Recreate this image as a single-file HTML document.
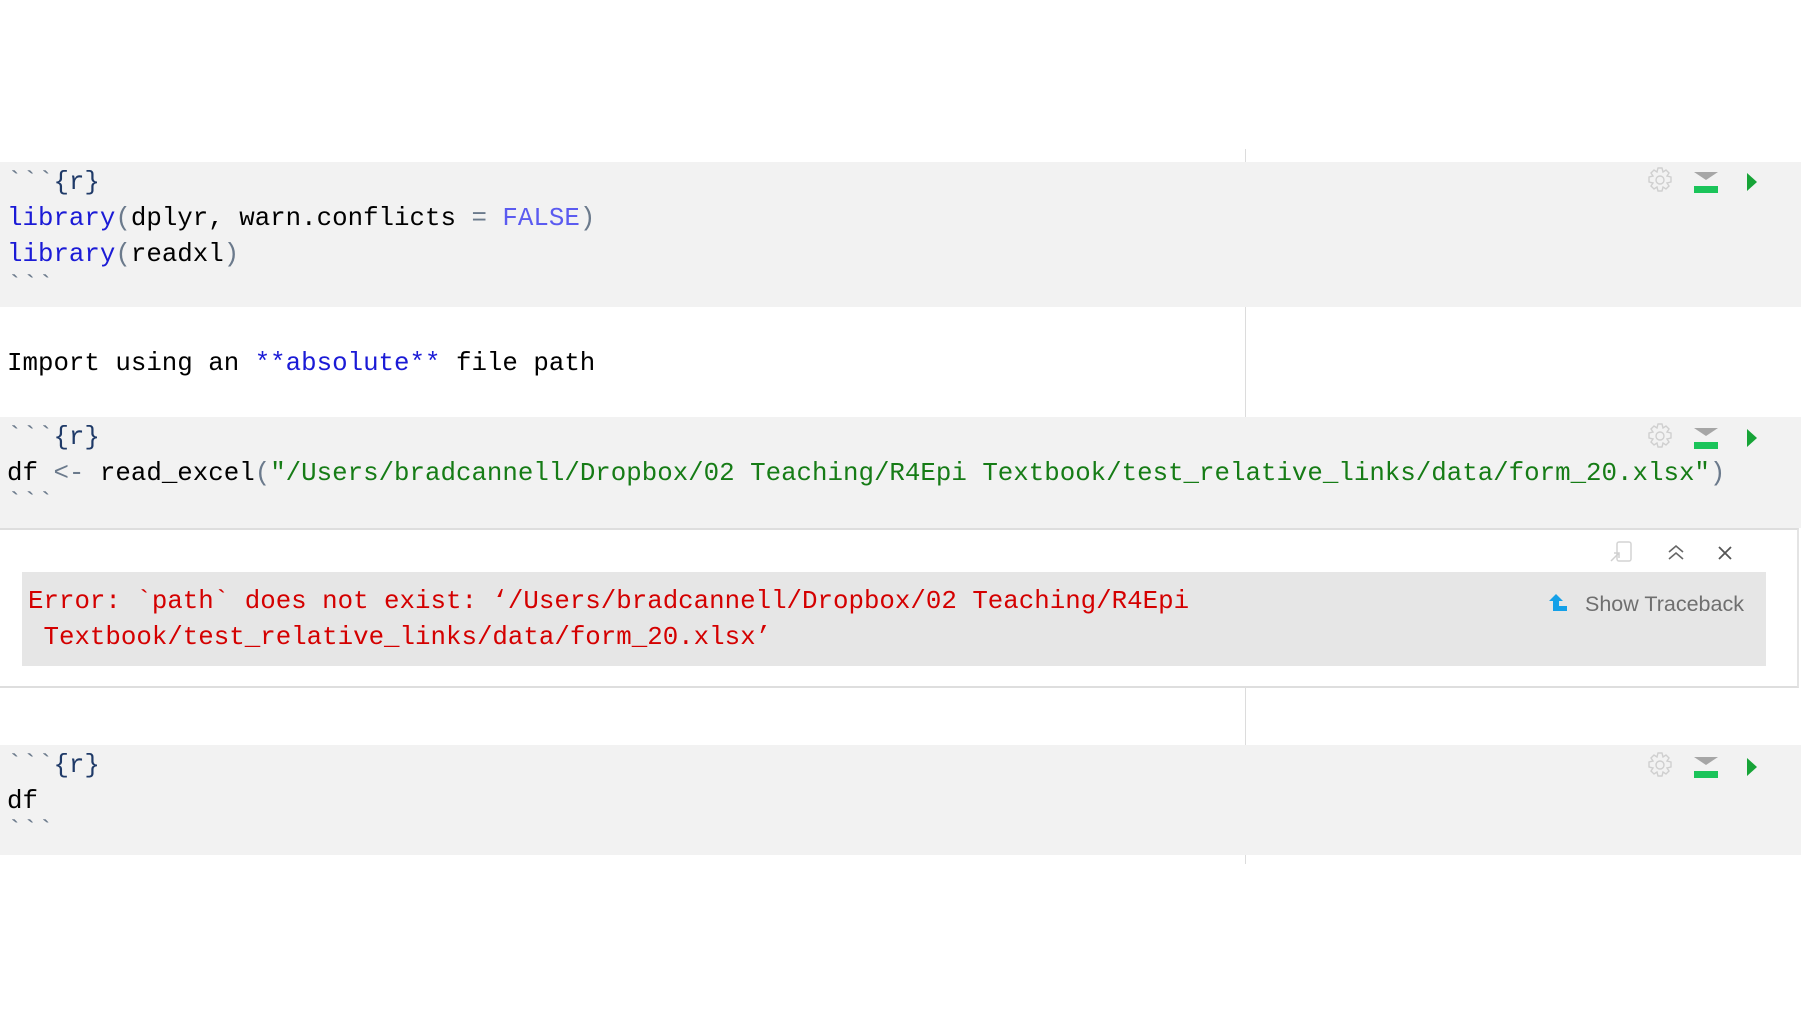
<!DOCTYPE html>
<html><head><meta charset="utf-8"><style>
html,body{margin:0;padding:0}
body{width:1801px;height:1013px;background:#ffffff;position:relative;overflow:hidden;font-family:"Liberation Mono",monospace}
.blk{position:absolute;left:0;width:1801px;background:#f2f2f2}
.txt{position:absolute;left:7px;font-size:25.8px;line-height:36px;white-space:pre;color:#000000;margin:0}
.kw{color:#1b1bd6}.pp{color:#6b7a8c}.st{color:#167c16}.cc{color:#1f3a68}
.vl{position:absolute;left:1245px;width:1px;background:#dcdcdc}
.ic{position:absolute}
</style></head><body>
<div class="vl" style="top:149px;height:380px"></div>
<div class="vl" style="top:688px;height:176px"></div>

<div class="blk" style="top:162px;height:145px"></div>
<div class="blk" style="top:417px;height:111px"></div>
<div style="position:absolute;left:0;top:528px;width:1799px;height:160px;border-top:2px solid #dedede;border-bottom:2px solid #dedede;border-right:2px solid #e4e4e4;background:#fff;box-sizing:border-box"></div>
<div style="position:absolute;left:22px;top:572px;width:1744px;height:94px;background:#e6e6e6"></div>
<div class="blk" style="top:745px;height:110px"></div>

<div class="txt" style="top:165px"><span class="pp">&#96;&#96;&#96;</span><span class="cc">{r}</span></div>
<div class="txt" style="top:201px"><span class="kw">library</span><span class="pp">(</span>dplyr, warn.conflicts <span class="pp">=</span> <span style="color:#5b5bf0">FALSE</span><span class="pp">)</span></div>
<div class="txt" style="top:237px"><span class="kw">library</span><span class="pp">(</span>readxl<span class="pp">)</span></div>
<div class="txt" style="top:269px"><span class="pp">&#96;&#96;&#96;</span></div>

<div class="txt" style="top:346px">Import using an <span class="kw">**absolute**</span> file path</div>

<div class="txt" style="top:420px"><span class="pp">&#96;&#96;&#96;</span><span class="cc">{r}</span></div>
<div class="txt" style="top:456px">df <span class="pp">&lt;-</span> read_excel<span class="pp">(</span><span class="st">"/Users/bradcannell/Dropbox/02 Teaching/R4Epi Textbook/test_relative_links/data/form_20.xlsx"</span><span class="pp">)</span></div>
<div class="txt" style="top:486px"><span class="pp">&#96;&#96;&#96;</span></div>

<div class="txt" style="top:584px;left:28px;color:#d40000">Error: &#96;path&#96; does not exist: ‘/Users/bradcannell/Dropbox/02 Teaching/R4Epi</div>
<div class="txt" style="top:620px;left:28px;color:#d40000"> Textbook/test_relative_links/data/form_20.xlsx’</div>

<div class="txt" style="top:748px"><span class="pp">&#96;&#96;&#96;</span><span class="cc">{r}</span></div>
<div class="txt" style="top:784px">df</div>
<div class="txt" style="top:814px"><span class="pp">&#96;&#96;&#96;</span></div>

<svg class="ic" style="left:1548px;top:594px" width="20" height="18" viewBox="0 0 20 18"><path d="M8 0 L15 7 L11 7 L11 12 L19 12 L19 17 L5 17 L5 7 L1 7 Z" fill="#14a0e8"/></svg>
<div style="position:absolute;left:1585px;top:592px;font-family:'Liberation Sans',sans-serif;font-size:21.5px;color:#6f6f6f">Show Traceback</div>
<svg class="ic" style="left:1608px;top:540px" width="26" height="24" viewBox="0 0 26 24"><rect x="9" y="2" width="14" height="19" rx="2" fill="none" stroke="#d4d4d4" stroke-width="1.5"/><path d="M3 21 L11 13 M6 13 L11 13 L11 18" stroke="#d0d0d0" stroke-width="1.5" fill="none"/></svg>
<svg class="ic" style="left:1666px;top:543px" width="20" height="18" viewBox="0 0 20 18"><path d="M3 9 L10 3 L17 9 M3 16 L10 10 L17 16" stroke="#666" stroke-width="1.6" fill="none"/></svg>
<svg class="ic" style="left:1717px;top:545px" width="16" height="16" viewBox="0 0 16 16"><path d="M2 2 L14 14 M14 2 L2 14" stroke="#555" stroke-width="1.8"/></svg>

<svg class="ic" style="left:1640px;top:163px" width="130" height="40" viewBox="0 0 130 40"><g transform="translate(20,17)" fill="none" stroke="#cfcfcf" stroke-width="1.4"><circle r="4"/><path d="M-2 -12 L2 -12 L3 -8 L6 -10 L9 -7 L7 -4 L11 -3 L11 2 L7 3 L9 6 L6 9 L3 7 L2 11 L-2 11 L-3 7 L-6 9 L-9 6 L-7 3 L-11 2 L-11 -3 L-7 -4 L-9 -7 L-6 -10 L-3 -8 Z"/></g><path d="M54 9 L78 9 L66 17 Z" fill="#a6a6a6"/><rect x="54" y="23" width="24" height="7" fill="#1bc45a"/><path d="M107 10 L117 19 L107 28 Z" fill="#17a437"/></svg>
<svg class="ic" style="left:1640px;top:419px" width="130" height="40" viewBox="0 0 130 40"><g transform="translate(20,17)" fill="none" stroke="#cfcfcf" stroke-width="1.4"><circle r="4"/><path d="M-2 -12 L2 -12 L3 -8 L6 -10 L9 -7 L7 -4 L11 -3 L11 2 L7 3 L9 6 L6 9 L3 7 L2 11 L-2 11 L-3 7 L-6 9 L-9 6 L-7 3 L-11 2 L-11 -3 L-7 -4 L-9 -7 L-6 -10 L-3 -8 Z"/></g><path d="M54 9 L78 9 L66 17 Z" fill="#a6a6a6"/><rect x="54" y="23" width="24" height="7" fill="#1bc45a"/><path d="M107 10 L117 19 L107 28 Z" fill="#17a437"/></svg>
<svg class="ic" style="left:1640px;top:748px" width="130" height="40" viewBox="0 0 130 40"><g transform="translate(20,17)" fill="none" stroke="#cfcfcf" stroke-width="1.4"><circle r="4"/><path d="M-2 -12 L2 -12 L3 -8 L6 -10 L9 -7 L7 -4 L11 -3 L11 2 L7 3 L9 6 L6 9 L3 7 L2 11 L-2 11 L-3 7 L-6 9 L-9 6 L-7 3 L-11 2 L-11 -3 L-7 -4 L-9 -7 L-6 -10 L-3 -8 Z"/></g><path d="M54 9 L78 9 L66 17 Z" fill="#a6a6a6"/><rect x="54" y="23" width="24" height="7" fill="#1bc45a"/><path d="M107 10 L117 19 L107 28 Z" fill="#17a437"/></svg>
</body></html>
